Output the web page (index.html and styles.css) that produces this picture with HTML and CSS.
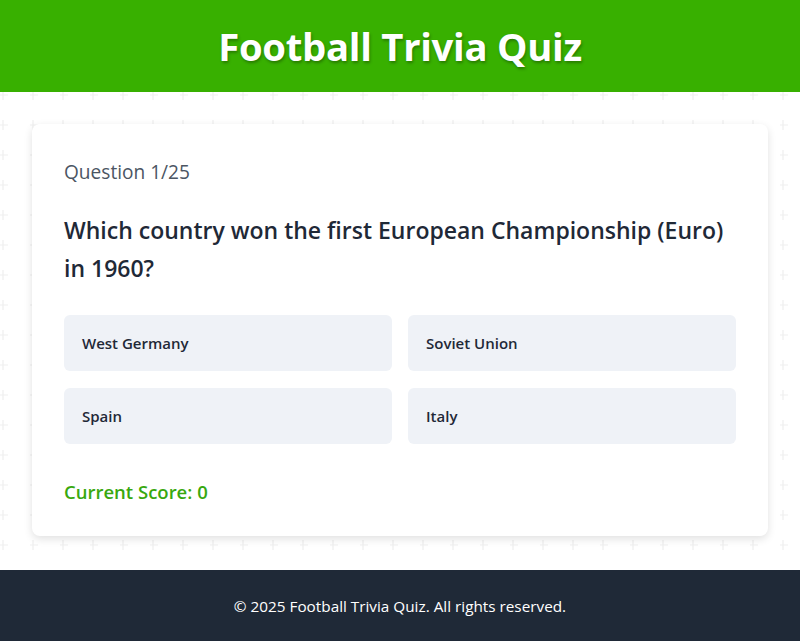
FILE: index.html
```html
<!DOCTYPE html>
<html lang="en">
<head>
<meta charset="utf-8">
<title>Football Trivia Quiz</title>
<link rel="stylesheet" href="styles.css">
</head>
<body>
<header class="site-header">
  <h1 class="site-title">Football Trivia Quiz</h1>
</header>
<main class="main">
  <section class="card">
    <p class="counter">Question 1/25</p>
    <h2 class="question">Which country won the first European Championship (Euro) in 1960?</h2>
    <div class="options">
      <button class="option">West Germany</button>
      <button class="option">Soviet Union</button>
      <button class="option">Spain</button>
      <button class="option">Italy</button>
    </div>
    <p class="score">Current Score: 0</p>
  </section>
</main>
<footer class="site-footer">
  <p class="footer-text">© 2025 Football Trivia Quiz. All rights reserved.</p>
</footer>
</body>
</html>
```

FILE: styles.css
```css
* { box-sizing: border-box; }
html, body { margin: 0; padding: 0; }
body {
  font-family: "Open Sans", "Noto Sans", sans-serif;
  color: #1f2937;
  background-color: #ffffff;
  background-image: url("data:image/svg+xml,%3Csvg xmlns='http://www.w3.org/2000/svg' width='30' height='30'%3E%3Cpath d='M3 0v10M-2 5h10' stroke='%23efefef' stroke-width='1.2' fill='none'/%3E%3C/svg%3E");
  background-position: 0 90px;
  min-height: 641px;
  display: flex;
  flex-direction: column;
}
.site-header {
  background: #38b000;
  height: 92px;
  display: flex;
  align-items: center;
  justify-content: center;
}
.site-title {
  margin: 0;
  color: #fff;
  font-size: 38.3px;
  font-weight: 700;
  letter-spacing: -0.3px;
  text-shadow: 1px 2px 3px rgba(0,0,0,0.3);
}
.main {
  flex: 1;
  padding: 32px 32px 33px;
}
.card {
  background: #fff;
  border-radius: 8px;
  box-shadow: 0 3px 8px rgba(0,0,0,0.12);
  padding: 32px 32px 29px;
}
.counter {
  margin: 0;
  font-size: 19.1px;
  line-height: 32px;
  color: #4b5563;
}
.question {
  margin: 23px 0 0;
  font-size: 23px;
  line-height: 38px;
  font-weight: 600;
  color: #1f2937;
}
.options {
  margin-top: 28px;
  display: grid;
  grid-template-columns: 1fr 1fr;
  gap: 17px 16px;
}
.option {
  height: 56px;
  border: none;
  border-radius: 6px;
  background: #eff2f7;
  text-align: left;
  padding: 0 18px;
  font-family: inherit;
  font-size: 15px;
  font-weight: 600;
  color: #1f2937;
}
.score {
  margin: 33px 0 0;
  font-size: 18.5px;
  line-height: 30px;
  font-weight: 600;
  color: #38a80f;
}
.site-footer {
  background: #1f2937;
  height: 71px;
  display: flex;
  align-items: center;
  justify-content: center;
}
.footer-text {
  margin: 0;
  color: #fff;
  font-size: 15.3px;
}
```
